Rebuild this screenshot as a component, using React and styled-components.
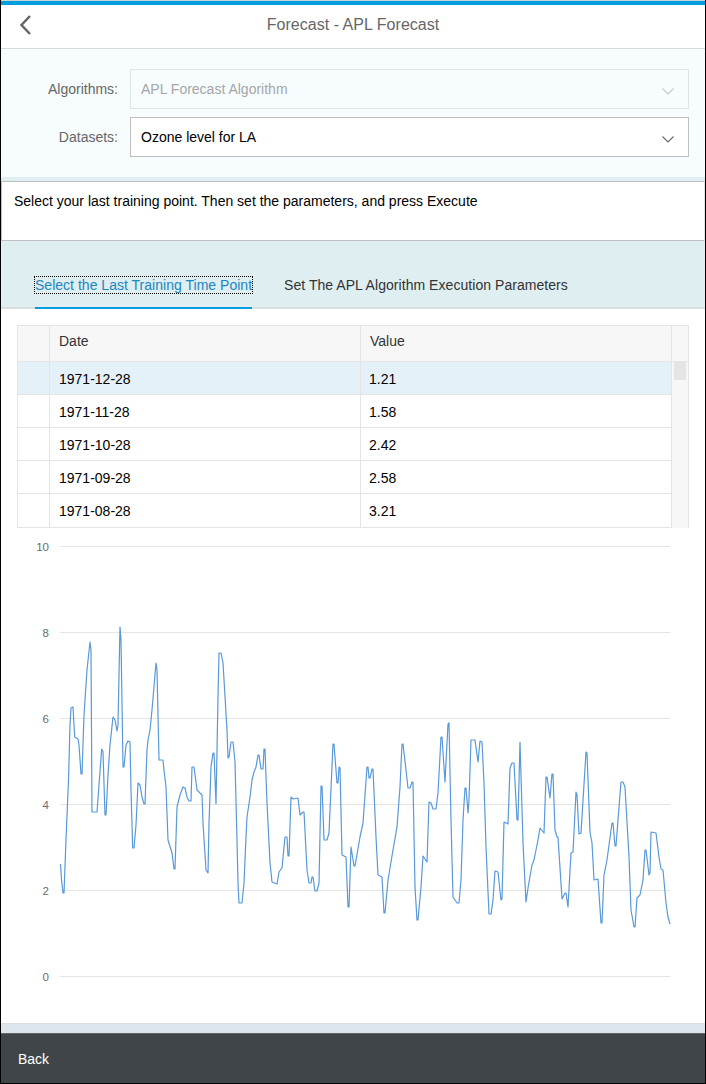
import React from "react";
import styled, { createGlobalStyle } from "styled-components";

const Global = createGlobalStyle`
  html, body { margin: 0; padding: 0; background: #fff; }
  body { font-family: "Liberation Sans", Arial, sans-serif; font-size: 14px; }
`;

const Page = styled.div`
  box-sizing: border-box;
  width: 706px;
  height: 1084px;
  display: flex;
  flex-direction: column;
  border: 1px solid #000;
  border-top: 0;
  background: #fff;
  overflow: hidden;
`;
const TopStripe = styled.div`
  height: 4px;
  flex: none;
  background: #009de0;
  border-top: 1px solid #cfd3d6;
`;
const Header = styled.header`
  position: relative;
  flex: none;
  height: 43px;
  display: flex;
  align-items: center;
  justify-content: center;
  border-bottom: 1px solid #d9d9d9;
  background: #fff;
  box-sizing: content-box;
`;
const BackIcon = styled.svg`
  position: absolute;
  left: 17px;
  top: 9px;
`;
const Title = styled.h1`
  margin: 0;
  font-size: 16px;
  font-weight: 400;
  color: #666;
  padding-bottom: 3px;
  letter-spacing: 0.03px;
`;
const Form = styled.section`
  flex: none;
  box-sizing: border-box;
  height: 128px;
  padding: 20px 16px 20px 0;
  display: flex;
  flex-direction: column;
  gap: 8px;
  background: #f7fcfe;
`;
const FormRow = styled.div`
  display: flex;
  align-items: center;
  gap: 12px;
  height: 40px;
`;
const Label = styled.label`
  width: 117px;
  text-align: right;
  color: #666;
  padding-bottom: 1px;
`;
const Select = styled.div`
  box-sizing: border-box;
  flex: 1;
  height: 40px;
  display: flex;
  align-items: center;
  justify-content: space-between;
  padding: 0 14px 0 10px;
  border: 1px solid ${(p) => (p.$disabled ? "#dfe4e5" : "#bfbfbf")};
  background: ${(p) => (p.$disabled ? "#f7fcfe" : "#fff")};
  color: ${(p) => (p.$disabled ? "#a6a6a6" : "#000")};
`;
const ChevronIcon = styled.svg`
  margin-top: 4px;
`;
const Band = styled.div`
  flex: none;
  height: 4px;
  background: #deeef1;
`;
const Message = styled.div`
  flex: none;
  box-sizing: border-box;
  height: 60px;
  padding: 11px 12px;
  line-height: 16px;
  color: #000;
  background: #fff;
  border: 1px solid #bfbfbf;
  border-right-color: #e5e5e5;
`;
const TabBar = styled.nav`
  flex: none;
  box-sizing: border-box;
  height: 68px;
  padding: 0 34px;
  display: flex;
  align-items: flex-end;
  gap: 32px;
  background: #deeef1;
  border-bottom: 2px solid #d9dfe0;
`;
const Tab = styled.div`
  height: 43px;
  margin-bottom: -2px;
  box-sizing: border-box;
  padding-top: 11px;
  border-bottom: 2px solid ${(p) => (p.$active ? "#009de0" : "transparent")};
  color: ${(p) => (p.$active ? "#1c86c0" : "#333")};
  letter-spacing: ${(p) => (p.$active ? "0.02px" : "0.05px")};
`;
const TabLabel = styled.span`
  display: inline-block;
  line-height: 16px;
  outline: ${(p) => (p.$active ? "1px dotted #000" : "none")};
`;
const Content = styled.main`
  flex: 1;
  min-height: 0;
  padding-top: 16px;
  display: flex;
  flex-direction: column;
  background: #fff;
`;
const Table = styled.div`
  flex: none;
  box-sizing: border-box;
  width: 672px;
  margin-left: 16px;
  border: 1px solid #e5e5e5;
  border-bottom: 0;
  position: relative;
`;
const Row = styled.div`
  display: grid;
  grid-template-columns: 32px 311px 311px 16px;
  height: ${(p) => (p.$head ? "36px" : p.$last ? "34px" : "33px")};
  background: ${(p) => (p.$head ? "#f7f7f7" : p.$selected ? "#e5f1f9" : "#fff")};
  color: ${(p) => (p.$head ? "#333" : "#000")};
`;
const Cell = styled.div`
  box-sizing: border-box;
  border-right: 1px solid #e5e5e5;
  border-bottom: 1px solid #e5e5e5;
  padding: ${(p) => (p.$head ? "7px 9px 0" : "9px 9px 0")};
  line-height: 16px;
  &:nth-child(3) { padding-left: ${(p) => (p.$head ? "9px" : "8px")}; }
`;
const ScrollCell = styled.div`
  box-sizing: border-box;
  background: #f7f7f7;
  border-bottom: ${(p) => (p.$head ? "1px solid #e5e5e5" : "0")};
`;
const ScrollThumb = styled.div`
  position: absolute;
  right: 2px;
  top: 36px;
  width: 12px;
  height: 18px;
  background: #e5e5e5;
`;
const ChartSvg = styled.svg`
  display: block;
  flex: none;
`;
const TickLabel = styled.text`
  font-family: "Liberation Sans", Arial, sans-serif;
  font-size: 11.5px;
  fill: #6a6d70;
`;
const FooterBand = styled.div`
  flex: none;
  height: 10px;
  box-sizing: border-box;
  background: #dce6ec;
  border-top: 1px solid #dddddd;
`;
const Footer = styled.footer`
  flex: none;
  box-sizing: border-box;
  height: 50px;
  padding-left: 17px;
  display: flex;
  align-items: center;
  color: #fff;
  background: #3f4548;
  border-top: 1px solid #5c666c;
`;

const Chevron = ({ color }) => (
  <ChevronIcon width="12" height="7" viewBox="0 0 12 7" fill="none">
    <path d="M0.5 0.5 L6 6 L11.5 0.5" stroke={color} strokeWidth="1.1" />
  </ChevronIcon>
);

const rows = [
  ["1971-12-28", "1.21"],
  ["1971-11-28", "1.58"],
  ["1971-10-28", "2.42"],
  ["1971-09-28", "2.58"],
  ["1971-08-28", "3.21"],
];

const pts = `60.5,864 61.5,880 63,893 64,893 66,840 68.5,780 70,725 71,708 73,707 74.7,737 78,739 79,745 81,774 82,774 84,715 87,670 90,642 91,650 92,812 93,812 97,812 99,785 101.7,749 103,752 105,815 106,815 108,775 110,745 113,717 115,720 117,731 118,725 119.5,650 120,627 121,640 123,767 124,767 126,745 128,741 130,742 131,790 132.7,848 134,848 136,825 138,783 140,785 142,797 144,804 145,804 147,750 148,740 150,730 152,710 156,663 157,670 159,760 163,760 164,770 166,787 168,840 172,853 174,869 175,869 177,807 180,795 183,787 185,788 187,797 189,801 191,801 192,767 194,767 197,790 202,795 203,823 206,870 208,873 209,823 211,767 213,753 214,753 216,804 217,750 218,697 219,653 221,653 223,663 227,730 228,758 229,757 231,742 233,742 235,762 237,840 238,883 239,903 242,903 244,883 246,837 247,817 250,797 252,780 254,772 256,767 258,755 259,755 261,769 263,769 264,749 265,749 267,803 270,863 272,882 277,884 279,872 282,868 285,837 287,837 288,856 289,856 291,797 293,799 298,798 300,815 303,812 304,812 307,870 309,883 311,883 312,877 313,877 315,891 317,891 319,883 321,786 322,786 324,840 327,840 329,833 333,744 334,744 337,783 338,783 339,767 340,768 342,855 346,857 348,907 349,907 351,847 354,866 355,866 360,837 363,823 367,767 368,767 369,778 370,778 372,769 373,769 376,837 378,875 382,877 384,913 385,913 388,880 393,850 397,827 400,787 402,744 403,744 406,770 408,788 410,788 412,782 413,782 415,887 417,920 418,920 421,887 423,856 427,862 429,802 431,803 433,809 436,809 438,793 441,737 442,737 445,782 448,724 449,723 451,820 453,897 457,903 459,903 461,880 463,820 465,788 466,788 468,813 469,800 471,740 475,740 478,762 480,741 482,742 484,783 486,847 489,914 491,914 493,900 495,871 498,872 501,900 502,899 504,822 508,824 510,768 512,763 514,763 517,820 518,820 520,742 523,843 526,902 528,888 532,865 534,860 538,840 540,828 544,833 546,777 547,777 550,798 552,774 553,774 555,830 557,837 558,837 562,899 565,893 566,893 568,907 571,853 573,852 576,792 577,795 579,834 581,833 586,752 587,753 590,832 592,843 594,880 598,879 601,923 602,923 604,875 607,860 612,823 613,823 615,846 616,846 619,807 621,782 623,782 625,787 629,857 631,910 634,927 635,927 637,898 640,895 643,880 645,850 646,850 649,875 650,873 651,832 656,833 659,857 661,869 663,870 666,903 668,917 670,924`;

// The chart drawing starts at page y = 528 and x = 1 (inside the frame).
const shifted = pts
  .split(" ")
  .map((p) => {
    const [x, y] = p.split(",").map(Number);
    return `${x - 1},${y - 528}`;
  })
  .join(" ");

const ticks = [10, 8, 6, 4, 2, 0];

export default function App() {
  return (
    <>
      <Global />
      <Page>
        <TopStripe />
        <Header>
          <BackIcon width="14" height="22" viewBox="0 0 14 22" fill="none">
            <path d="M12 2 L3.5 11 L12 20" stroke="#666" strokeWidth="2.5" />
          </BackIcon>
          <Title>Forecast - APL Forecast</Title>
        </Header>
        <Form>
          <FormRow>
            <Label>Algorithms:</Label>
            <Select $disabled>
              <span>APL Forecast Algorithm</span>
              <Chevron color="#c4c8c9" />
            </Select>
          </FormRow>
          <FormRow>
            <Label>Datasets:</Label>
            <Select>
              <span>Ozone level for LA</span>
              <Chevron color="#666" />
            </Select>
          </FormRow>
        </Form>
        <Band />
        <Message>Select your last training point. Then set the parameters, and press Execute</Message>
        <TabBar>
          <Tab $active>
            <TabLabel $active>Select the Last Training Time Point</TabLabel>
          </Tab>
          <Tab>
            <TabLabel>Set The APL Algorithm Execution Parameters</TabLabel>
          </Tab>
        </TabBar>
        <Content>
          <Table>
            <Row $head>
              <Cell $head />
              <Cell $head>Date</Cell>
              <Cell $head>Value</Cell>
              <ScrollCell $head />
            </Row>
            {rows.map(([d, v], i) => (
              <Row key={d} $selected={i === 0} $last={i === rows.length - 1}>
                <Cell />
                <Cell>{d}</Cell>
                <Cell>{v}</Cell>
                <ScrollCell />
              </Row>
            ))}
            <ScrollThumb />
          </Table>
          <ChartSvg width="704" height="495" viewBox="0 0 704 495">
            {ticks.map((t) => {
              const y = 18.5 + (10 - t) * 43;
              return (
                <g key={t}>
                  <line x1="59" x2="669" y1={y} y2={y} stroke="#e5e5e5" strokeWidth="1" />
                  <TickLabel x="48" y={y + 4} textAnchor="end">
                    {t}
                  </TickLabel>
                </g>
              );
            })}
            <polyline points={shifted} fill="none" stroke="#5899da" strokeWidth="1.2" strokeLinejoin="round" />
          </ChartSvg>
        </Content>
        <FooterBand />
        <Footer>Back</Footer>
      </Page>
    </>
  );
}
